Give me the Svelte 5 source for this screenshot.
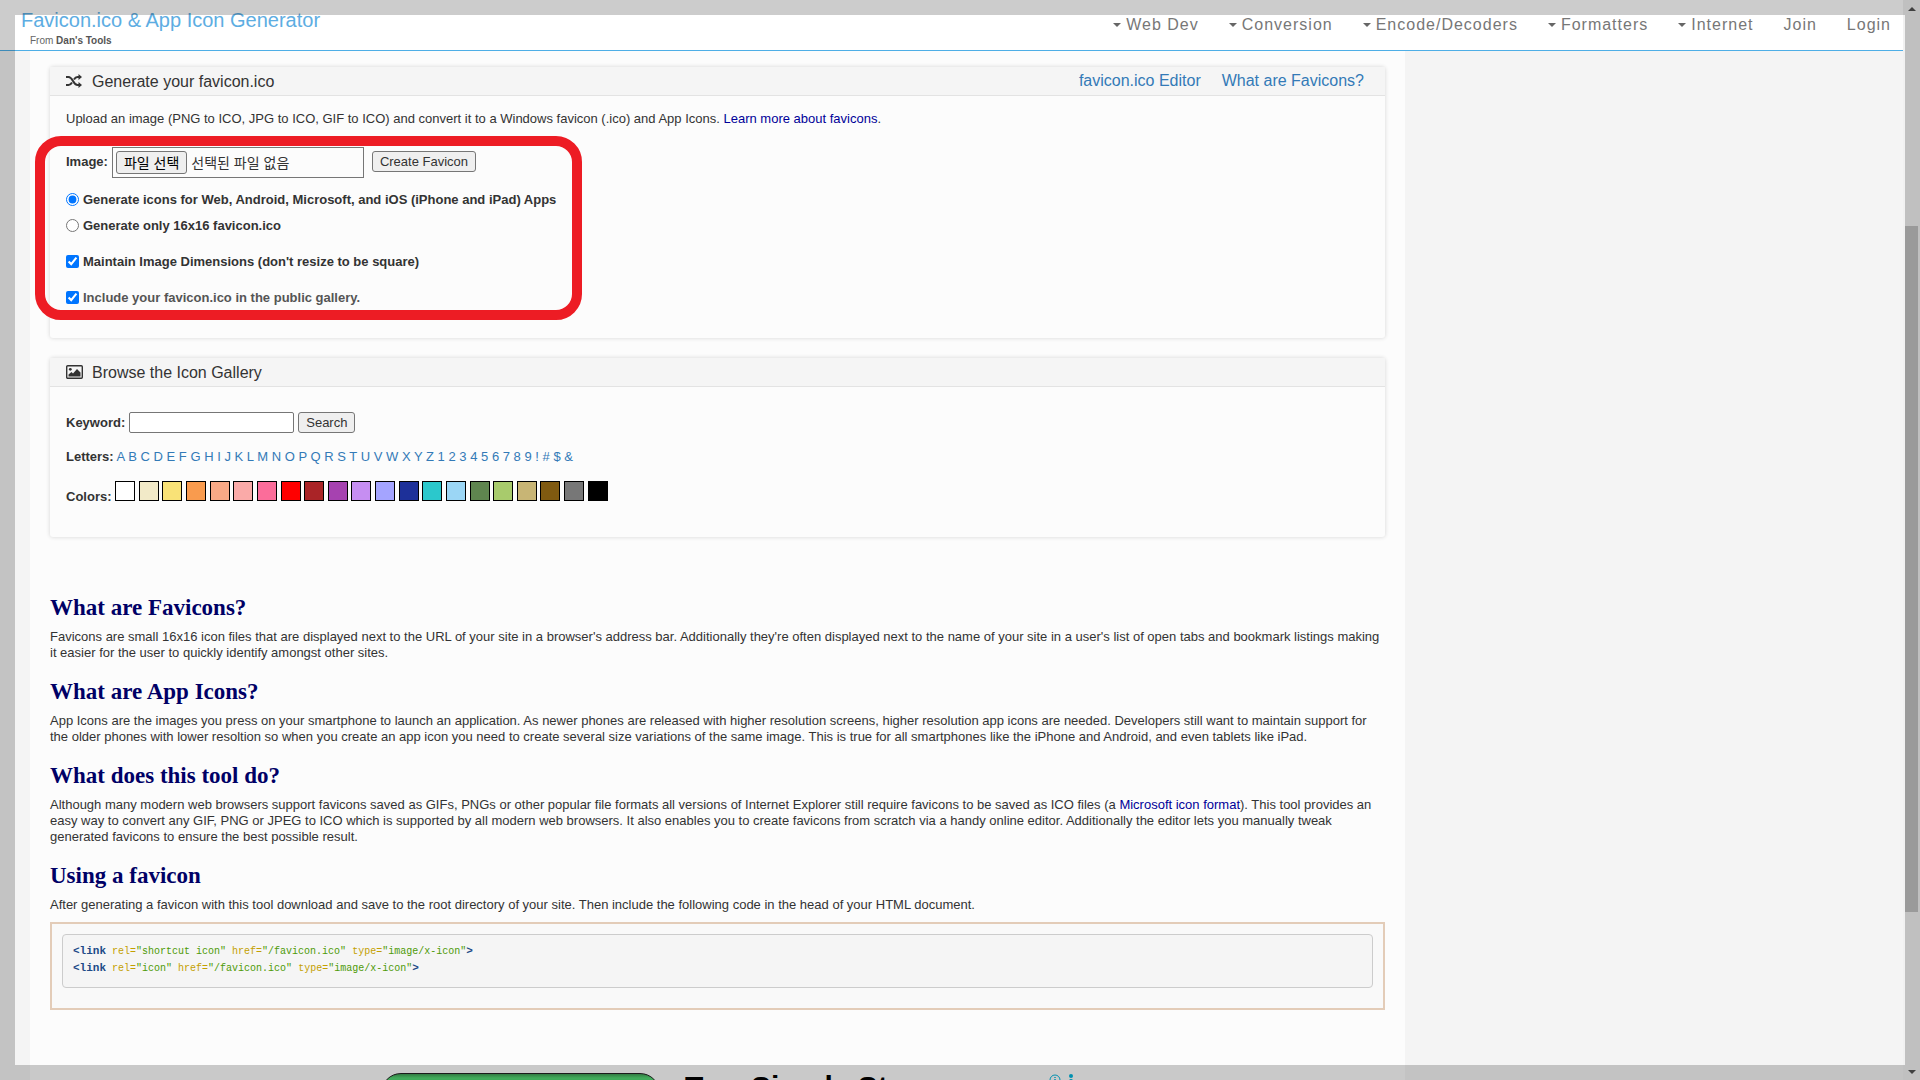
<script lang="ts">
	type Swatch = { name: string; value: string };

	const menus = ['Web Dev', 'Conversion', 'Encode/Decoders', 'Formatters', 'Internet'];
	const letters = [...'ABCDEFGHIJKLMNOPQRSTUVWXYZ123456789!#$&'];

	const swatches: Swatch[] = [
		{ name: 'White', value: '#ffffff' },
		{ name: 'Cream', value: '#f2eac8' },
		{ name: 'Yellow', value: '#f9e277' },
		{ name: 'Orange', value: '#f99b4e' },
		{ name: 'Peach', value: '#f9a986' },
		{ name: 'Salmon', value: '#faaaa8' },
		{ name: 'Pink', value: '#fb6d9a' },
		{ name: 'Red', value: '#ff0000' },
		{ name: 'Brick', value: '#aa2427' },
		{ name: 'Purple', value: '#a642b0' },
		{ name: 'Lilac', value: '#c68ef2' },
		{ name: 'Periwinkle', value: '#a4a4ff' },
		{ name: 'Navy', value: '#1d3099' },
		{ name: 'Turquoise', value: '#2bc8cc' },
		{ name: 'Sky', value: '#9bd6f5' },
		{ name: 'Forest', value: '#5f854f' },
		{ name: 'Lime', value: '#a8cb6c' },
		{ name: 'Tan', value: '#c8b575' },
		{ name: 'Brown', value: '#805a10' },
		{ name: 'Gray', value: '#777777' },
		{ name: 'Black', value: '#000000' }
	];

	const snippets = [
		[
			['rel', 'shortcut icon'],
			['href', '/favicon.ico'],
			['type', 'image/x-icon']
		],
		[
			['rel', 'icon'],
			['href', '/favicon.ico'],
			['type', 'image/x-icon']
		]
	];

	let mode = $state('all');
	let keepDimensions = $state(true);
	let includeInGallery = $state(true);
	let keyword = $state('');
	let fileName = $state('선택된 파일 없음');
	let fileInput: HTMLInputElement;

	function updateFile() {
		fileName = fileInput.files?.[0]?.name ?? '선택된 파일 없음';
	}
</script>

<div class="window">
	<div class="page">
		<header class="site-header">
			<div class="brand">
				<a class="site-title" href="#top">Favicon.ico &amp; App Icon Generator</a>
				<span class="byline">From <a href="#tools">Dan's Tools</a></span>
			</div>
			<nav class="site-nav" aria-label="Main">
				{#each menus as menu}
					<a href="#menu"><i class="caret" aria-hidden="true"></i>{menu}</a>
				{/each}
				<a href="#join">Join</a>
				<a href="#login">Login</a>
			</nav>
		</header>

		<main>
			<section class="panel generate">
				<div class="panel-heading">
					<svg width="18" height="14" viewBox="0 0 18 14" aria-hidden="true">
						<path
							d="M0 3h2.500c4.500 0 4.500 8 9 8H13M0 11h2.500c1.700 0 2.700-1.100 3.500-2.500M8 5.500C8.800 4.100 9.500 3 11.500 3H13"
							fill="none"
							stroke="currentColor"
							stroke-width="2"
						/>
						<path d="M12.500 0l3.500 3-3.500 3zM12.500 8l3.500 3-3.500 3z" fill="currentColor" />
					</svg>
					<h2>Generate your favicon.ico</h2>
					<nav class="panel-links" aria-label="Favicon">
						<a href="#editor">favicon.ico Editor</a>
						<a href="#what">What are Favicons?</a>
					</nav>
				</div>
				<div class="panel-body">
					<p>
						Upload an image (PNG to ICO, JPG to ICO, GIF to ICO) and convert it to a Windows favicon
						(.ico) and App Icons. <a class="inline" href="#learn">Learn more about favicons</a>.
					</p>
					<form onsubmit={(event) => event.preventDefault()}>
						<div class="upload">
							<label for="image">Image:</label>
							<div class="file">
								<input
									id="image"
									class="hidden-file"
									type="file"
									bind:this={fileInput}
									onchange={updateFile}
								/>
								<button class="korean" type="button" onclick={() => fileInput.click()}>파일 선택</button>
								<span class="korean">{fileName}</span>
							</div>
							<button class="create" type="submit">Create Favicon</button>
						</div>
						<label class="option">
							<input type="radio" name="mode" value="all" bind:group={mode} />
							<span>Generate icons for Web, Android, Microsoft, and iOS (iPhone and iPad) Apps</span>
						</label>
						<label class="option">
							<input type="radio" name="mode" value="ico" bind:group={mode} />
							<span>Generate only 16x16 favicon.ico</span>
						</label>
						<label class="option check">
							<input type="checkbox" bind:checked={keepDimensions} />
							<span>Maintain Image Dimensions (don't resize to be square)</span>
						</label>
						<label class="option check muted">
							<input type="checkbox" bind:checked={includeInGallery} />
							<span>Include your favicon.ico in the public gallery.</span>
						</label>
					</form>
					<div class="highlight" aria-hidden="true"></div>
				</div>
			</section>

			<section class="panel gallery">
				<div class="panel-heading">
					<svg width="18" height="14" viewBox="0 0 18 14" aria-hidden="true">
						<rect
							x="0.700"
							y="0.700"
							width="15.600"
							height="12.600"
							rx="1"
							fill="none"
							stroke="currentColor"
							stroke-width="1.400"
						/>
						<path d="M2.500 11.500V9.500l3-2.500 1.500 1.500L11 4l3.500 3.500v4z" fill="currentColor" />
						<circle cx="4.300" cy="4.300" r="1.400" fill="currentColor" />
					</svg>
					<h2>Browse the Icon Gallery</h2>
				</div>
				<div class="panel-body">
					<form class="search" onsubmit={(event) => event.preventDefault()}>
						<label for="keyword">Keyword:</label>
						<input id="keyword" type="text" bind:value={keyword} />
						<button type="submit">Search</button>
					</form>
					<div class="letters">
						<strong>Letters:</strong>
						{#each letters as letter}
							<a href="#letter">{letter}</a>{' '}
						{/each}
					</div>
					<div class="colors">
						<strong>Colors:</strong>
						{#each swatches as swatch}
							<a href="#color" aria-label={swatch.name} style:background={swatch.value}></a>{' '}
						{/each}
					</div>
				</div>
			</section>

			<article>
				<h3>What are Favicons?</h3>
				<p>
					Favicons are small 16x16 icon files that are displayed next to the URL of your site in a
					browser's address bar. Additionally they're often displayed next to the name of your site
					in a user's list of open tabs and bookmark listings making it easier for the user to
					quickly identify amongst other sites.
				</p>
				<h3>What are App Icons?</h3>
				<p>
					App Icons are the images you press on your smartphone to launch an application. As newer
					phones are released with higher resolution screens, higher resolution app icons are needed.
					Developers still want to maintain support for the older phones with lower resoltion so when
					you create an app icon you need to create several size variations of the same image. This
					is true for all smartphones like the iPhone and Android, and even tablets like iPad.
				</p>
				<h3>What does this tool do?</h3>
				<p>
					Although many modern web browsers support favicons saved as GIFs, PNGs or other popular
					file formats all versions of Internet Explorer still require favicons to be saved as ICO
					files (a <a class="inline" href="#ico">Microsoft icon format</a>). This tool provides an
					easy way to convert any GIF, PNG or JPEG to ICO which is supported by all modern web
					browsers. It also enables you to create favicons from scratch via a handy online editor.
					Additionally the editor lets you manually tweak generated favicons to ensure the best
					possible result.
				</p>
				<h3>Using a favicon</h3>
				<p>
					After generating a favicon with this tool download and save to the root directory of your
					site. Then include the following code in the head of your HTML document.
				</p>
				<div class="code-box">
					<div class="code">
						{#each snippets as attributes}
							<code
								><b>&lt;link</b>{#each attributes as [name, value]}{' '}<span class="attr">{name}=</span
									><span class="value">"{value}"</span>{/each}<b>&gt;</b></code
							>
						{/each}
					</div>
				</div>
			</article>

			<aside class="ad" aria-label="Advertisement">
				<div class="ad-button"></div>
				<strong>Two Simple Steps</strong>
				<svg width="32" height="14" viewBox="0 0 32 14" aria-hidden="true">
					<circle cx="7" cy="7" r="5" fill="none" stroke="#00b5dc" />
					<path d="M7 4v1M7 6v4" stroke="#00b5dc" stroke-width="1.500" />
					<circle cx="23" cy="3" r="2" fill="#00b5dc" />
					<circle cx="23" cy="8" r="2" fill="#00b5dc" />
				</svg>
			</aside>
		</main>
	</div>

	<div class="scrollbar" aria-hidden="true">
		<i class="arrow up"></i>
		<div class="track"><div class="thumb"></div></div>
		<i class="arrow down"></i>
	</div>

	<div class="frame" aria-hidden="true"></div>
</div>

<style>
	:global(body) {
		background: #f4f4f4;
	}

	.window {
		color: #333;
		display: flex;
		font-family: 'Liberation Sans', Arial, sans-serif;
		font-size: 13px;
		height: 100vh;
		line-height: 16px;
		overflow: hidden;
		position: relative;
	}

	.page {
		flex: 1;
		min-width: 0;
		overflow: hidden;
	}

	a {
		color: #337ab7;
		text-decoration: none;
	}

	a.inline {
		color: #000099;
	}

	p {
		margin: 0;
	}

	.site-header {
		background: #fff;
		border-bottom: 1px solid #4eaee6;
		box-sizing: border-box;
		display: flex;
		height: 51px;
		justify-content: space-between;
		padding: 8px 12px 0 21px;
	}

	.brand {
		display: flex;
		flex-direction: column;
	}

	.site-title {
		color: #5dade2;
		font-size: 20px;
		line-height: 24px;
	}

	.byline {
		color: #666;
		font-size: 10px;
		line-height: 18px;
		padding-left: 9px;
	}

	.byline a {
		color: #555;
		font-weight: 700;
	}

	.site-nav {
		display: flex;
		font-size: 16px;
		gap: 30px;
		letter-spacing: 1px;
	}

	.site-nav a {
		align-items: center;
		color: #777;
		display: flex;
		height: 34px;
	}

	.caret {
		border-left: 4px solid transparent;
		border-right: 4px solid transparent;
		border-top: 4px solid #666;
		margin-right: 5px;
	}

	main {
		background: #fcfcfc;
		box-sizing: border-box;
		margin: 0 498px 0 30px;
		padding: 16px 20px 0;
	}

	.panel {
		background: #fcfcfc;
		border-radius: 3px;
		box-shadow: 0 0 4px rgba(0, 0, 0, 0.16);
		margin-bottom: 20px;
	}

	.generate {
		height: 271px;
	}

	.gallery {
		height: 179px;
	}

	.panel-heading {
		align-items: center;
		background: #f5f5f5;
		border-bottom: 1px solid #e3e3e3;
		display: flex;
		height: 28px;
		padding: 0 21px 0 16px;
	}

	h2 {
		font-size: 16px;
		font-weight: 400;
		margin: 0 0 0 8px;
		padding-top: 2px;
	}

	.panel-links {
		display: flex;
		font-size: 16px;
		gap: 21px;
		margin-left: auto;
	}

	.panel-body {
		padding: 15px 16px 0;
		position: relative;
	}

	button {
		background: #efefef;
		border: 1px solid #767676;
		border-radius: 3px;
		color: #333;
		font: inherit;
		height: 21px;
		line-height: 16px;
		padding: 0 7px;
	}

	label,
	strong {
		font-weight: 700;
	}

	.upload {
		align-items: center;
		display: flex;
		gap: 4px;
		margin: 20px 0 14px;
	}

	.upload label,
	.create,
	.option input {
		margin: 0 0 2px;
	}

	.file {
		align-items: center;
		border: 1px solid #767676;
		box-sizing: border-box;
		display: flex;
		gap: 4px;
		height: 31px;
		margin-right: 4px;
		padding: 0 3px;
		width: 252px;
	}

	.file button {
		color: #000;
		height: 23px;
	}

	.korean {
		font-family: 'Liberation Sans', 'Noto Sans CJK KR', sans-serif;
		font-size: 14px;
	}

	.hidden-file {
		height: 1px;
		opacity: 0;
		position: absolute;
		width: 1px;
	}

	.option {
		align-items: center;
		display: flex;
		gap: 4px;
		height: 16px;
		margin-bottom: 10px;
	}

	.option input {
		height: 13px;
		width: 13px;
	}

	.check {
		margin-top: 20px;
	}

	.muted {
		color: #555;
	}

	.highlight {
		border: 10px solid #ed1c24;
		border-radius: 26px;
		box-sizing: border-box;
		height: 184px;
		left: -15px;
		pointer-events: none;
		position: absolute;
		top: 40px;
		width: 547px;
	}

	.search {
		align-items: center;
		display: flex;
		gap: 4px;
		margin: 10px 0 16px;
	}

	.search input {
		border: 1px solid #767676;
		border-radius: 2px;
		box-sizing: border-box;
		height: 21px;
		width: 165px;
	}

	.letters {
		margin-bottom: 16px;
	}

	.colors a {
		border: 1px solid #000;
		display: inline-block;
		height: 18px;
		width: 18px;
	}

	article {
		padding-top: 39px;
	}

	h3 {
		color: #000066;
		font-family: Georgia, 'Liberation Serif', serif;
		font-size: 23px;
		font-weight: 700;
		line-height: 24px;
		margin: 0 0 9px;
	}

	article p {
		margin-bottom: 19px;
	}

	.code-box {
		background: #f9f9f9;
		border: 2px solid #e3ccb8;
		margin-top: -10px;
		padding: 10px 10px 20px;
	}

	.code {
		background: #f5f5f5;
		border: 1px solid #ccc;
		border-radius: 4px;
		padding: 8px 10px 10px;
	}

	code {
		display: block;
		font-family: 'Liberation Mono', monospace;
		font-size: 10px;
		line-height: 17px;
	}

	code b {
		color: #204a87;
		font-size: 11px;
	}

	.attr {
		color: #c4a000;
	}

	.value {
		color: #4e9a06;
	}

	.ad {
		align-items: flex-start;
		display: flex;
		margin: 63px 0 0 331px;
	}

	.ad-button {
		background: linear-gradient(#3f9a54, #52d672 4px);
		border: 1px solid #222;
		border-radius: 20px;
		box-sizing: border-box;
		height: 60px;
		margin-right: 25px;
		width: 279px;
	}

	.ad strong {
		color: #000;
		font-size: 30px;
		line-height: 28px;
		width: 363px;
	}

	.scrollbar {
		align-items: center;
		background: #f1f1f1;
		display: flex;
		flex-direction: column;
		width: 17px;
	}

	.track {
		flex: 1;
		padding: 209px 0 151px;
		width: 13px;
	}

	.thumb {
		background: #c1c1c1;
		height: 100%;
	}

	.arrow {
		border-left: 4px solid transparent;
		border-right: 4px solid transparent;
		margin: 7px 0 6px;
	}

	.up {
		border-bottom: 4px solid #505050;
	}

	.down {
		border-top: 4px solid #505050;
	}

	/* shade around the visible area */
	.frame {
		border: 15px solid rgba(0, 0, 0, 0.2);
		inset: 0;
		pointer-events: none;
		position: absolute;
	}
</style>
